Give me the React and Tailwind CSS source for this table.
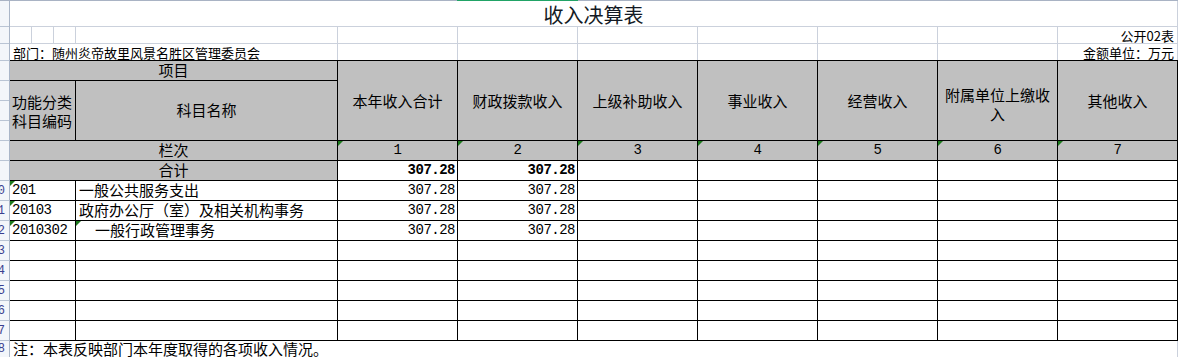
const CJK = "font-['Noto_Sans_CJK_SC','Noto_Sans',sans-serif]";
const MONO = "font-['Liberation_Mono','DejaVu_Sans_Mono',monospace] text-[14px] tracking-[-0.5px]";
const COLS = "grid grid-cols-[22px_22px_22px_262px_repeat(7,120px)]";
const GRID = "border-[#cbd1dc]";

const heads = ["本年收入合计", "财政拨款收入", "上级补助收入", "事业收入", "经营收入", null, "其他收入"];

const data = [
  { code: "201", name: "一般公共服务支出", a: "307.28", b: "307.28" },
  { code: "20103", name: "政府办公厅（室）及相关机构事务", a: "307.28", b: "307.28" },
  { code: "2010302", name: "一般行政管理事务", a: "307.28", b: "307.28", indent: true, mark: true },
  {},
  {},
  {},
  {},
  {},
];

function Mark() {
  return (
    <svg className="absolute left-0 top-0" width="5" height="5" viewBox="0 0 5 5">
      <polygon points="0,0 5,0 0,5" fill="#1d7a1d" />
    </svg>
  );
}

function Strip() {
  const hs = [26, 17, 17, ...Array(14).fill(20), 17];
  return (
    <div className="w-[10px] shrink-0 border-r border-[#aab6c8] bg-[#f3f6fa] flex flex-col">
      {hs.map((h, i) => (
        <div
          key={i}
          style={{ height: h }}
          className="shrink-0 border-b border-[#b9c4d4] overflow-hidden flex items-center"
        >
          {i + 1 >= 10 && (
            <div className="w-[20px] ml-[-15px] shrink-0 flex justify-end text-[12px] leading-none text-[#3a3f8f] font-['Liberation_Mono',monospace]">
              {i + 1}
            </div>
          )}
        </div>
      ))}
    </div>
  );
}

export default function App() {
  const cell = "relative border-r border-b border-black";
  return (
    <div className={`w-[1178px] h-[357px] overflow-hidden bg-white text-black ${CJK}`}>
      <div className="h-px flex">
        <div className="w-[457px] bg-[#a9b3c4]" />
        <div className="w-[121px] bg-[#21a366]" />
        <div className="flex-1 bg-[#a9b3c4]" />
      </div>
      <div className="flex">
        <Strip />
        <div className="w-[1168px] flex flex-col">
          <div className={`h-[26px] border-b border-r ${GRID} flex items-center justify-center pt-[3px] text-[20px] text-[#141a24]`}>
            收入决算表
          </div>

          <div className={`${COLS} h-[17px]`}>
            {[...Array(10)].map((_, i) => (
              <div key={i} className={`border-r border-b ${GRID}`} />
            ))}
            <div className={`border-r border-b ${GRID} flex items-center justify-end pr-[3px] text-[13px] leading-none`}>
              公开02表
            </div>
          </div>

          <div className={`${COLS} h-[16px]`}>
            <div className="col-span-4 flex items-center pl-[3px] text-[13px] leading-none whitespace-nowrap border-r border-[#cbd1dc]">
              部门：随州炎帝故里风景名胜区管理委员会
            </div>
            {[...Array(6)].map((_, i) => (
              <div key={i} className={`border-r ${GRID}`} />
            ))}
            <div className={`border-r ${GRID} flex items-center justify-end pr-[3px] text-[13px] leading-none`}>
              金额单位：万元
            </div>
          </div>

          <div className={`${COLS} grid-rows-[repeat(14,20px)] border-t border-black text-[15px]`}>
            <div className={`${cell} col-span-4 bg-[#c0c0c0] flex items-center justify-center`}>项目</div>
            {heads.map((h, i) => (
              <div key={i} className={`${cell} row-span-4 bg-[#c0c0c0] flex items-center justify-center text-center leading-[19px]`}>
                {h === null ? (
                  <span className="pt-[6px]">
                    附属单位上缴收
                    <br />入
                  </span>
                ) : (
                  h
                )}
              </div>
            ))}
            <div className={`${cell} col-span-3 row-span-3 bg-[#c0c0c0] flex flex-col justify-center pl-[2px] leading-[19px]`}>
              <span>功能分类</span>
              <span>科目编码</span>
            </div>
            <div className={`${cell} row-span-3 bg-[#c0c0c0] flex items-center justify-center`}>科目名称</div>

            <div className={`${cell} col-span-4 bg-[#c0c0c0] flex items-center justify-center`}>栏次</div>
            {[1, 2, 3, 4, 5, 6, 7].map((n) => (
              <div key={n} className={`${cell} bg-[#c0c0c0] flex items-center justify-center ${MONO}`}>
                <Mark />
                {n}
              </div>
            ))}

            <div className={`${cell} col-span-4 bg-[#c0c0c0] flex items-center justify-center`}>合计</div>
            <div className={`${cell} flex items-center justify-end pr-[2px] font-bold ${MONO}`}>307.28</div>
            <div className={`${cell} flex items-center justify-end pr-[2px] font-bold ${MONO}`}>307.28</div>
            {[...Array(5)].map((_, i) => (
              <div key={i} className={cell} />
            ))}

            {data.map((r, i) => (
              <div key={i} className="contents">
                <div className={`${cell} col-span-3 flex items-center pl-[2px] ${MONO}`}>
                  {r.code && <Mark />}
                  {r.code}
                </div>
                <div className={`${cell} flex items-center whitespace-nowrap ${r.indent ? "pl-[19px]" : "pl-[3px]"}`}>
                  {r.mark && <Mark />}
                  {r.name}
                </div>
                <div className={`${cell} flex items-center justify-end pr-[2px] ${MONO}`}>{r.a}</div>
                <div className={`${cell} flex items-center justify-end pr-[2px] ${MONO}`}>{r.b}</div>
                {[...Array(5)].map((_, j) => (
                  <div key={j} className={cell} />
                ))}
              </div>
            ))}
          </div>

          <div className={`h-[17px] flex items-center pl-[3px] text-[15px] whitespace-nowrap border-r ${GRID}`}>
            注：本表反映部门本年度取得的各项收入情况。
          </div>
        </div>
      </div>
    </div>
  );
}
